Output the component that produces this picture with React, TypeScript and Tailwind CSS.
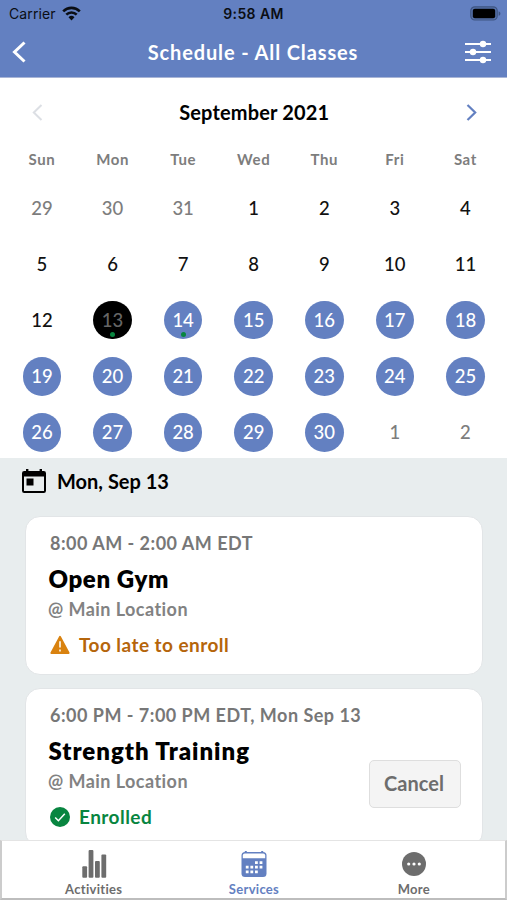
import type { ReactNode } from 'react';
import clsx from 'clsx';

type DayKind = 'outside' | 'plain' | 'available' | 'selected';

interface Day {
  label: number;
  kind: DayKind;
  enrolled?: boolean;
}

const weekdays = ['Sun', 'Mon', 'Tue', 'Wed', 'Thu', 'Fri', 'Sat'];

const days: Day[] = [
  ...[29, 30, 31].map((label): Day => ({ label, kind: 'outside' })),
  ...Array.from({ length: 30 }, (_, i): Day => {
    const label = i + 1;
    if (label < 13) return { label, kind: 'plain' };
    if (label === 13) return { label, kind: 'selected', enrolled: true };
    return { label, kind: 'available', enrolled: label === 14 };
  }),
  ...[1, 2].map((label): Day => ({ label, kind: 'outside' })),
];

const dayStyles: Record<DayKind, string> = {
  outside: 'text-[#7d7d7d]',
  plain: 'text-[#111111]',
  available: 'bg-[#6380c1] text-white',
  selected: 'bg-black text-[#666666]',
};

function WifiIcon() {
  return (
    <svg className="w-[19px] h-[15px]" viewBox="0 0 19 15">
      <g fill="none" stroke="#0b0e14" strokeWidth="2.6">
        <path d="M1.2 5.3a11.8 11.8 0 0 1 16.6 0" />
        <path d="M4.3 8.7a7.4 7.4 0 0 1 10.4 0" />
      </g>
      <path d="M9.5 14.4 6.5 11.3a4.3 4.3 0 0 1 6 0Z" fill="#0b0e14" />
    </svg>
  );
}

function BatteryIcon() {
  return (
    <svg className="w-[31px] h-[15px]" viewBox="0 0 31 15">
      <rect x="0.8" y="0.8" width="26.4" height="13.2" rx="4" fill="#5672ab" stroke="#3f5582" strokeWidth="1.2" />
      <rect x="2.8" y="2.8" width="22.4" height="9.4" rx="2" fill="#000" />
      <path d="M28.6 5.2c2.4.8 2.4 3.8 0 4.6Z" fill="#3f5582" />
    </svg>
  );
}

function SlidersIcon() {
  return (
    <svg className="w-[26px] h-[24px]" viewBox="0 0 26 24">
      <path d="M0 4h26M0 12h26M0 20h26" stroke="#fff" strokeWidth="2" />
      <g fill="#fff">
        <circle cx="18" cy="4" r="3.2" />
        <circle cx="8" cy="12" r="3.2" />
        <circle cx="18" cy="20" r="3.2" />
      </g>
    </svg>
  );
}

function TodayIcon() {
  return (
    <svg className="w-[24px] h-[25px]" viewBox="0 0 24 25">
      <path
        fillRule="evenodd"
        d="M4 0h2.4v2h11.2V0H20v2h1.8A2.2 2.2 0 0 1 24 4.2v17.6a2.2 2.2 0 0 1-2.2 2.2H2.2A2.2 2.2 0 0 1 0 21.8V4.2A2.2 2.2 0 0 1 2.2 2H4ZM2 7.5V22h20V7.5Z"
        fill="#000"
      />
      <rect x="4.5" y="9.5" width="7" height="7" fill="#000" />
    </svg>
  );
}

function WarningIcon() {
  return (
    <svg className="w-[20px] h-[20px]" viewBox="0 0 20 20">
      <path d="M10 1.8 18.7 18H1.3Z" fill="#d9820f" stroke="#d9820f" strokeWidth="1.8" strokeLinejoin="round" />
      <path d="M10 6.3v6.3M10 14.4v2" stroke="#fbeed9" strokeWidth="1.8" />
    </svg>
  );
}

function CheckIcon() {
  return (
    <svg className="w-[20px] h-[20px]" viewBox="0 0 20 20">
      <circle cx="10" cy="10" r="10" fill="#088540" />
      <path d="m5.2 10.5 3.2 3.2 6.4-7" fill="none" stroke="#fff" strokeWidth="1.5" />
    </svg>
  );
}

function ActivitiesIcon() {
  return (
    <svg className="w-[26px] h-[28px]" viewBox="0 0 26 28">
      <g fill="#6d6d6d">
        <rect x="1.3" y="16.2" width="4.8" height="11.5" rx="1" />
        <rect x="7.6" y="0" width="4.8" height="27.7" rx="1" />
        <rect x="14" y="11" width="4.8" height="16.7" rx="1" />
        <rect x="20.4" y="4.5" width="4.8" height="23.2" rx="1" />
      </g>
    </svg>
  );
}

function ServicesIcon() {
  return (
    <svg className="w-[26px] h-[26px]" viewBox="0 0 26 26">
      <path d="M4.8 0v3M21.2 0v3" stroke="#6380c1" strokeWidth="2" />
      <rect x="0.5" y="1" width="25" height="25" rx="3.5" fill="#6380c1" />
      <path d="M1.8 7.2V4.5q0-2 2-2h18.4q2 0 2 2v2.7Z" fill="#fff" />
      <g fill="#fff">
        <path d="M14 10.3h2.8v2.8H14zM18.6 10.3h2.8v2.8h-2.8z" />
        <path d="M4.8 14.8h2.8v2.8H4.8zM9.4 14.8h2.8v2.8H9.4zM14 14.8h2.8v2.8H14zM18.6 14.8h2.8v2.8h-2.8z" />
        <path d="M4.8 19.4h2.8v2.8H4.8zM9.4 19.4h2.8v2.8H9.4zM14 19.4h2.8v2.8H14z" />
      </g>
    </svg>
  );
}

function MoreIcon() {
  return (
    <svg className="w-[24px] h-[24px]" viewBox="0 0 24 24">
      <circle cx="12" cy="12" r="12" fill="#6d6d6d" />
      <g fill="#fff">
        <circle cx="6.7" cy="12" r="1.6" />
        <circle cx="12" cy="12" r="1.6" />
        <circle cx="17.3" cy="12" r="1.6" />
      </g>
    </svg>
  );
}

function Header() {
  return (
    <header className="h-[78px] shrink-0 bg-[#6380c1] border-b border-[#a9b5d6]">
      <div className="h-[27px] grid grid-cols-3 items-center font-['Inter'] text-[14px] text-[#0b0e14]">
        <div className="flex items-center gap-1.5 pl-[9px]">
          <span className="tracking-[0.1px]">Carrier</span>
          <WifiIcon />
        </div>
        <span className="text-center font-semibold tracking-[0.4px]">9:58 AM</span>
        <div className="flex justify-end pr-[6px]">
          <BatteryIcon />
        </div>
      </div>
      <div className="h-[50px] flex items-center justify-between pl-[12px] pr-[16px]">
        <button className="w-[29px]">
          <svg className="w-[14px] h-[22px]" viewBox="0 0 14 22">
            <path d="M12.5 1.5 2.5 11l10 9.5" fill="none" stroke="#fff" strokeWidth="3" />
          </svg>
        </button>
        <h1 className="text-[20px] font-bold tracking-[0.87px] text-white">Schedule - All Classes</h1>
        <button>
          <SlidersIcon />
        </button>
      </div>
    </header>
  );
}

function Calendar() {
  return (
    <section className="h-[380px] shrink-0 bg-white pl-[6.7px] pr-[6.3px]">
      <div className="h-[67px] flex items-center justify-between pl-[25px] pr-[24px]">
        <svg className="mt-px w-[11px] h-[17px]" viewBox="0 0 11 17">
          <path d="M9.5 1 1.8 8.5l7.7 7.5" fill="none" stroke="#dcdfe4" strokeWidth="2" />
        </svg>
        <h2 className="text-[20px] leading-7 font-bold tracking-[0.15px] text-black">September 2021</h2>
        <svg className="mt-px w-[11px] h-[17px]" viewBox="0 0 11 17">
          <path d="m1.5 1 7.7 7.5L1.5 16" fill="none" stroke="#6380c1" strokeWidth="2.2" />
        </svg>
      </div>
      <div className="h-[28px] grid grid-cols-7 items-center text-center text-[15px] font-bold tracking-[0.6px] text-[#7d7d7d]">
        {weekdays.map((name) => (
          <span key={name}>{name}</span>
        ))}
      </div>
      <div className="pt-[6.6px] grid grid-cols-7 auto-rows-[56.2px]">
        {days.map((day, i) => (
          <div key={i} className="flex items-center justify-center">
            <div
              className={clsx(
                'relative size-[38.5px] rounded-full flex items-center justify-center pt-[1.5px] text-[18.5px] font-medium',
                dayStyles[day.kind]
              )}
            >
              {day.label}
              {day.enrolled && (
                <span className="absolute bottom-[2px] left-[17px] size-[5px] rounded-full bg-[#088540]" />
              )}
            </div>
          </div>
        ))}
      </div>
    </section>
  );
}

interface ClassCardProps {
  time: string;
  title: string;
  titleClassName: string;
  status: ReactNode;
  action?: string;
}

function ClassCard({ time, title, titleClassName, status, action }: ClassCardProps) {
  return (
    <article className="h-[159px] shrink-0 flex justify-between rounded-[15px] border border-[#e2e5e7] bg-white pl-[22px] pr-[21px]">
      <div className="flex flex-col whitespace-nowrap">
        <p className="pl-[2px] mt-[14px] text-[18px] leading-6 font-bold tracking-[0.49px] text-[#777777]">{time}</p>
        <h3 className={clsx('pl-[0.5px] mt-[8px] text-[24px] leading-[32px] font-extrabold text-black', titleClassName)}>
          {title}
        </h3>
        <p className="mt-px text-[18px] leading-[26px] font-bold tracking-[0.45px] text-[#828282]">@ Main Location</p>
        <div className="pl-[1.5px] mt-[11px] flex items-center gap-[9.5px] text-[19px] leading-6 font-bold tracking-[0.45px]">
          {status}
        </div>
      </div>
      {action && (
        <button className="mt-[71px] h-[48px] w-[92px] shrink-0 rounded-[5px] border border-[#dedede] bg-[#f4f4f4] pr-[2px] pb-[2px] text-[20px] font-bold text-[#6d6d6d]">
          {action}
        </button>
      )}
    </article>
  );
}

function TabBar() {
  return (
    <nav className="h-[60px] shrink-0 grid grid-cols-3 border-t border-x-2 border-b-2 border-t-[#e4e4e4] border-x-[#cccccc] border-b-[#bdbdbd] bg-white px-[11px] text-[13px] font-bold tracking-[0.3px] text-[#6d6d6d]">
      <a className="flex flex-col items-center pt-[9px] pl-[1px]">
        <span className="h-[31px]"><ActivitiesIcon /></span>
        <span className="leading-4">Activities</span>
      </a>
      <a className="flex flex-col items-center pt-[9px] pl-[1px] text-[#6380c1]">
        <span className="h-[31px] pt-[1px]"><ServicesIcon /></span>
        <span className="leading-4">Services</span>
      </a>
      <a className="flex flex-col items-center pt-[9px]">
        <span className="h-[31px] pt-[2px]"><MoreIcon /></span>
        <span className="leading-4">More</span>
      </a>
    </nav>
  );
}

export default function App() {
  return (
    <div className="w-[507px] h-[900px] flex flex-col overflow-hidden bg-white font-['Lato',sans-serif]">
      <Header />
      <Calendar />
      <main className="flex-1 min-h-0 overflow-hidden bg-[#e8edee]">
        <div className="h-[58px] flex items-start gap-[11px] pl-[22px] pt-[10px]">
          <span className="pt-px">
            <TodayIcon />
          </span>
          <h2 className="text-[20px] leading-[26px] font-bold text-black">Mon, Sep 13</h2>
        </div>
        <div className="flex flex-col gap-[13px] pl-[25px] pr-[24px]">
          <ClassCard
            time="8:00 AM - 2:00 AM EDT"
            title="Open Gym"
            titleClassName="tracking-[0.6px]"
            status={
              <>
                <WarningIcon />
                <span className="text-[#b5650b]">Too late to enroll</span>
              </>
            }
          />
          <ClassCard
            time="6:00 PM - 7:00 PM EDT, Mon Sep 13"
            title="Strength Training"
            titleClassName="tracking-[0.97px]"
            status={
              <>
                <CheckIcon />
                <span className="text-[#088540]">Enrolled</span>
              </>
            }
            action="Cancel"
          />
        </div>
      </main>
      <TabBar />
    </div>
  );
}
